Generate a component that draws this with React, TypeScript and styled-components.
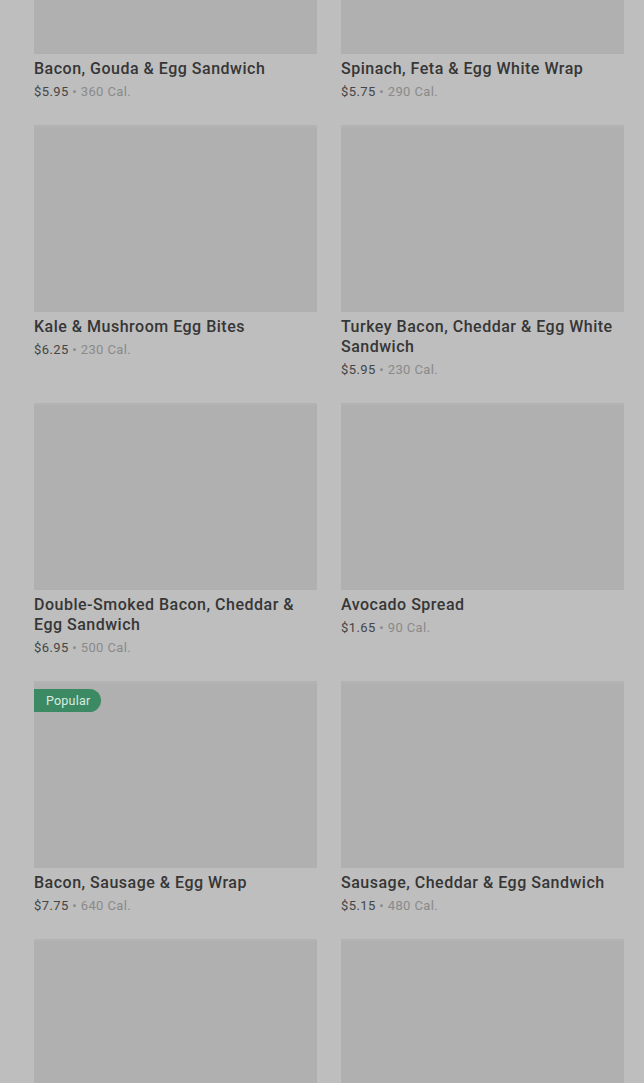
import React from "react";
import styled, { createGlobalStyle } from "styled-components";

const GlobalStyle = createGlobalStyle`
  html, body {
    margin: 0;
    padding: 0;
    background: #bebebe;
    overflow: hidden;
    height: 100%;
  }
  body {
    font-family: Roboto, "Noto Sans", "Liberation Sans", sans-serif;
    -webkit-font-smoothing: antialiased;
  }
`;

const Page = styled.main`
  width: 644px;
  height: 1083px;
  overflow: hidden;
  background: #bebebe;
`;

const Grid = styled.div`
  display: grid;
  grid-template-columns: 283px 283px;
  column-gap: 24px;
  row-gap: 23px;
  align-items: start;
  padding: 0 20px 0 34px;
  margin-top: -133px;
`;

const Card = styled.article`
  display: flex;
  flex-direction: column;
  cursor: pointer;
`;

const ImageBox = styled.div`
  position: relative;
  height: 187px;
  background:
    linear-gradient(180deg, rgba(255, 255, 255, 0.04) 0, rgba(255, 255, 255, 0.04) 2px, transparent 3px),
    #b0b0b0;
`;

const Badge = styled.span`
  position: absolute;
  top: 8px;
  left: 0;
  height: 23px;
  padding: 0 11px 0 12px;
  display: flex;
  align-items: center;
  background: #3b8a63;
  color: #dbeae0;
  font-size: 12.5px;
  font-weight: 400;
  letter-spacing: 0.2px;
  border-radius: 0 12px 12px 0;
`;

const Title = styled.h3`
  margin: 5px 0 0;
  font-size: 16px;
  line-height: 20px;
  font-weight: 500;
  color: #363636;
  letter-spacing: 0.5px;
`;

const Meta = styled.p`
  margin: 3px 0 0;
  font-size: 13px;
  line-height: 20px;
  letter-spacing: 0.4px;
  color: #454545;
`;

const Price = styled.span`
  color: #454545;
`;

const Cal = styled.span`
  color: #8a8a8a;
`;

type Item = { name: string; price?: string; cal?: string; popular?: boolean };

const items: Item[] = [
  { name: "Bacon, Gouda & Egg Sandwich", price: "$5.95", cal: "360 Cal." },
  { name: "Spinach, Feta & Egg White Wrap", price: "$5.75", cal: "290 Cal." },
  { name: "Kale & Mushroom Egg Bites", price: "$6.25", cal: "230 Cal." },
  { name: "Turkey Bacon, Cheddar & Egg White Sandwich", price: "$5.95", cal: "230 Cal." },
  { name: "Double-Smoked Bacon, Cheddar & Egg Sandwich", price: "$6.95", cal: "500 Cal." },
  { name: "Avocado Spread", price: "$1.65", cal: "90 Cal." },
  { name: "Bacon, Sausage & Egg Wrap", price: "$7.75", cal: "640 Cal.", popular: true },
  { name: "Sausage, Cheddar & Egg Sandwich", price: "$5.15", cal: "480 Cal." },
  { name: "" },
  { name: "" },
];

export default function App() {
  return (
    <>
      <GlobalStyle />
      <Page>
        <Grid>
          {items.map((it, i) => (
            <Card key={i}>
              <ImageBox>{it.popular && <Badge>Popular</Badge>}</ImageBox>
              {it.name && <Title>{it.name}</Title>}
              {it.price && (
                <Meta>
                  <Price>{it.price}</Price> <Cal>• {it.cal}</Cal>
                </Meta>
              )}
            </Card>
          ))}
        </Grid>
      </Page>
    </>
  );
}
